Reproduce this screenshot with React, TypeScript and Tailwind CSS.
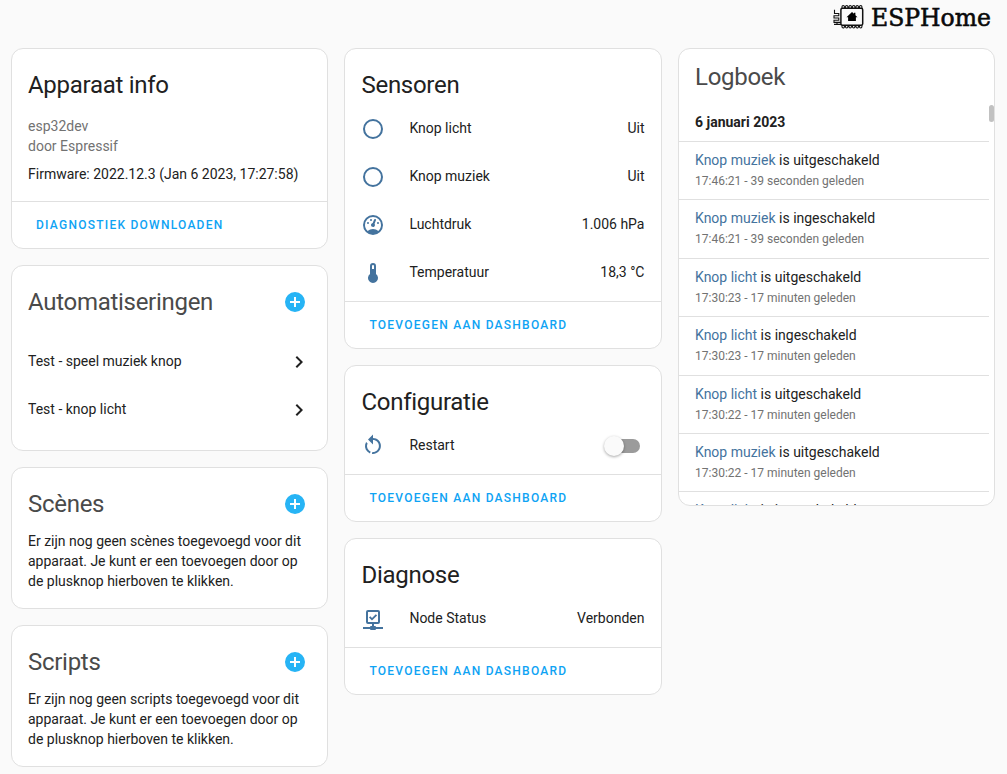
import type { ReactNode } from 'react';

const paths = {
  radio:
    'M12,20A8,8 0 0,1 4,12A8,8 0 0,1 12,4A8,8 0 0,1 20,12A8,8 0 0,1 12,20M12,2A10,10 0 0,0 2,12A10,10 0 0,0 12,22A10,10 0 0,0 22,12A10,10 0 0,0 12,2Z',
  gauge:
    'M12,2A10,10 0 0,0 2,12A10,10 0 0,0 12,22A10,10 0 0,0 22,12A10,10 0 0,0 12,2M12,4A8,8 0 0,1 20,12C20,14.4 19,16.5 17.3,18C15.9,16.7 14,16 12,16C10,16 8.2,16.7 6.7,18C5,16.5 4,14.4 4,12A8,8 0 0,1 12,4M14,5.89C13.62,5.9 13.26,6.15 13.1,6.54L11.81,9.77L11.71,10C11,10.13 10.41,10.6 10.14,11.26C9.73,12.29 10.23,13.45 11.26,13.86C12.29,14.27 13.45,13.77 13.86,12.74C14.12,12.08 14,11.32 13.57,10.76L13.67,10.5L14.96,7.29L14.97,7.26C15.17,6.75 14.92,6.17 14.41,5.96C14.28,5.91 14.15,5.89 14,5.89M10,6A1,1 0 0,0 9,7A1,1 0 0,0 10,8A1,1 0 0,0 11,7A1,1 0 0,0 10,6M7,9A1,1 0 0,0 6,10A1,1 0 0,0 7,11A1,1 0 0,0 8,10A1,1 0 0,0 7,9M17,9A1,1 0 0,0 16,10A1,1 0 0,0 17,11A1,1 0 0,0 18,10A1,1 0 0,0 17,9Z',
  thermometer:
    'M15 13V5A3 3 0 0 0 9 5V13A5 5 0 1 0 15 13M12 4A1 1 0 0 1 13 5V8H11V5A1 1 0 0 1 12 4Z',
  restart:
    'M12,4C14.1,4 16.1,4.8 17.6,6.3C20.7,9.4 20.7,14.5 17.6,17.6C15.8,19.5 13.3,20.2 10.9,19.9L11.4,17.9C13.1,18.1 14.9,17.5 16.2,16.2C18.5,13.9 18.5,10.1 16.2,7.7C15.1,6.6 13.5,6 12,6V10.6L7,5.6L12,0.6V4M6.3,17.6C3.7,15 3.3,11 5.1,7.9L6.6,9.4C5.5,11.6 5.9,14.4 7.8,16.2C8.3,16.7 8.9,17.1 9.6,17.4L9,19.4C8,19 7.1,18.4 6.3,17.6Z',
  network:
    'M15,20A1,1 0 0,0 14,19H13V17H17A2,2 0 0,0 19,15V5A2,2 0 0,0 17,3H7A2,2 0 0,0 5,5V15A2,2 0 0,0 7,17H11V19H10A1,1 0 0,0 9,20H2V22H9A1,1 0 0,0 10,23H14A1,1 0 0,0 15,22H22V20H15M7,15V5H17V15H7M11,13.5L8,10.6L9.3,9.3L11,11L14.8,7.2L16.1,8.5L11,13.5Z',
  plus:
    'M17,13H13V17H11V13H7V11H11V7H13V11H17M12,2A10,10 0 0,0 2,12A10,10 0 0,0 12,22A10,10 0 0,0 22,12A10,10 0 0,0 12,2Z',
  chevron: 'M8.59,16.58L13.17,12L8.59,7.41L10,6L16,12L10,18L8.59,16.58Z',
};

function Icon({ name, className }: { name: keyof typeof paths; className: string }) {
  return (
    <svg viewBox="0 0 24 24" className={`size-6 shrink-0 fill-current ${className}`}>
      <path d={paths[name]} />
    </svg>
  );
}

function Card({ children, className = '' }: { children: ReactNode; className?: string }) {
  return (
    <section className={`flex flex-col overflow-hidden rounded-xl border border-[#e0e0e0] bg-white ${className}`}>
      {children}
    </section>
  );
}

function Title({ children, onAdd = false, className = 'pl-4' }: { children: ReactNode; onAdd?: boolean; className?: string }) {
  return (
    <header
      className={`flex h-[60px] shrink-0 items-center justify-between pt-3 pr-5 ${className} ${onAdd ? 'text-[#4a4a4a]' : ''}`}
    >
      <h1 className="text-2xl leading-[48px] font-normal tracking-[-0.012em]">{children}</h1>
      {onAdd && <Icon name="plus" className="text-[#27b4f5]" />}
    </header>
  );
}

function Action({ children, className = 'px-6' }: { children: ReactNode; className?: string }) {
  return (
    <footer className={`mt-auto flex h-[47px] shrink-0 items-center border-t border-[#e0e0e0] ${className}`}>
      <button className="text-xs font-medium tracking-[1.25px] text-[#0ea3f4] uppercase">{children}</button>
    </footer>
  );
}

function Entity({ icon, name, children }: { icon: keyof typeof paths; name: string; children: ReactNode }) {
  return (
    <div className="flex h-10 items-center">
      <Icon name={icon} className="text-[#44739e]" />
      <span className="-mt-0.5 ml-[24.4px] flex-1">{name}</span>
      <span className="-mt-0.5">{children}</span>
    </div>
  );
}

function EntityCard({ title, children, className }: { title: string; children: ReactNode; className: string }) {
  return (
    <Card className={className}>
      <Title className="pl-[16.5px]">{title}</Title>
      <div className="flex flex-col gap-2 pr-[16.5px] pl-4">{children}</div>
      <Action className="px-[24.4px]">Toevoegen aan dashboard</Action>
    </Card>
  );
}

function Toggle() {
  return (
    <div className="relative mt-0.5 mr-[4.5px] flex h-5 w-9 items-center justify-end">
      <div className="h-3.5 w-8 rounded-full bg-[#9b9b9b]" />
      <div className="absolute top-0 left-0 size-5 rounded-full bg-[#fafafa] shadow-[0_1px_3px_rgba(0,0,0,0.35)]" />
    </div>
  );
}

const log = [
  ['Knop muziek', 'uitgeschakeld', '17:46:21 - 39 seconden geleden'],
  ['Knop muziek', 'ingeschakeld', '17:46:21 - 39 seconden geleden'],
  ['Knop licht', 'uitgeschakeld', '17:30:23 - 17 minuten geleden'],
  ['Knop licht', 'ingeschakeld', '17:30:23 - 17 minuten geleden'],
  ['Knop licht', 'uitgeschakeld', '17:30:22 - 17 minuten geleden'],
  ['Knop muziek', 'uitgeschakeld', '17:30:22 - 17 minuten geleden'],
  ['Knop licht', 'ingeschakeld', '17:30:22 - 17 minuten geleden'],
];

function Logo() {
  return (
    <svg width="160" height="36" viewBox="0 0 160 36" className="block">
      <g fill="none" stroke="#111">
        <rect x="8.9" y="8.2" width="21.8" height="17" rx="1.5" strokeWidth="1.5" />
        <path
          d="M10 8V6.7a1.2 1.2 0 0 1 2.4 0V8m1.1 0V6.7a1.2 1.2 0 0 1 2.4 0V8m1.1 0V6.7a1.2 1.2 0 0 1 2.4 0V8m1.1 0V6.7a1.2 1.2 0 0 1 2.4 0V8m1.1 0V6.7a1.2 1.2 0 0 1 2.4 0V8m1.1 0V6.7a1.2 1.2 0 0 1 2.4 0V8M10 25.5V26.8a1.2 1.2 0 0 0 2.4 0v-1.3m1.1 0V26.8a1.2 1.2 0 0 0 2.4 0v-1.3m1.1 0V26.8a1.2 1.2 0 0 0 2.4 0v-1.3m1.1 0V26.8a1.2 1.2 0 0 0 2.4 0v-1.3m1.1 0V26.8a1.2 1.2 0 0 0 2.4 0v-1.3m1.1 0V26.8a1.2 1.2 0 0 0 2.4 0v-1.3"
          strokeWidth="1.1"
        />
        <path d="M2.5 9.8V13.5H6.8V15.8H2V18H6.8V20.2H2V22.4H9M2 24.4H9M5 22.4V24.4" strokeWidth="1.1" />
      </g>
      <path d="M20 11.9l2 1.9v-1h1.4v2.4l2.1 2h-1.6v3.8h-7.8v-3.8h-1.6z" fill="#000" />
      <text
        x="39"
        y="25.5"
        textLength="120"
        lengthAdjust="spacingAndGlyphs"
        fontSize="24.5"
        fill="#0a0a0a"
        stroke="#0a0a0a"
        strokeWidth="0.6"
        className="font-['DejaVu_Serif',serif]"
      >
        ESPHome
      </text>
    </svg>
  );
}

export default function App() {
  return (
    <main className="flex h-[774px] w-[1007px] flex-col overflow-hidden bg-[#fafafa] font-['Roboto',sans-serif] text-sm leading-5 text-[#212121]">
      <div className="flex h-12 shrink-0 justify-end pr-[15px]">
        <Logo />
      </div>
      <div className="flex items-start gap-4 pl-[11px]">
        <div className="flex w-[317px] flex-col gap-4">
          <Card className="h-[201px]">
            <Title>Apparaat info</Title>
            <div className="px-4 pt-[7px]">
              <p className="text-[#727272]">esp32dev</p>
              <p className="text-[#727272]">door Espressif</p>
              <p className="mt-2">Firmware: 2022.12.3 (Jan 6 2023, 17:27:58)</p>
            </div>
            <Action>Diagnostiek downloaden</Action>
          </Card>
          <Card className="h-[186px]">
            <Title onAdd>Automatiseringen</Title>
            <div className="pt-3 pr-4 pl-4">
              {['Test - speel muziek knop', 'Test - knop licht'].map((name) => (
                <div key={name} className="flex h-12 items-center justify-between">
                  <span className="-mt-0.5">{name}</span>
                  <Icon name="chevron" className="" />
                </div>
              ))}
            </div>
          </Card>
          <Card className="h-[142px]">
            <Title onAdd>Scènes</Title>
            <p className="px-4 pt-[3px]">
              Er zijn nog geen scènes toegevoegd voor dit apparaat. Je kunt er een toevoegen door op de plusknop
              hierboven te klikken.
            </p>
          </Card>
          <Card className="h-[142px]">
            <Title onAdd>Scripts</Title>
            <p className="px-4 pt-[3px]">
              Er zijn nog geen scripts toegevoegd voor dit apparaat. Je kunt er een toevoegen door op de plusknop
              hierboven te klikken.
            </p>
          </Card>
        </div>

        <div className="flex w-[318px] flex-col gap-4">
          <EntityCard title="Sensoren" className="h-[301px]">
            <Entity icon="radio" name="Knop licht">Uit</Entity>
            <Entity icon="radio" name="Knop muziek">Uit</Entity>
            <Entity icon="gauge" name="Luchtdruk">1.006 hPa</Entity>
            <Entity icon="thermometer" name="Temperatuur">18,3 °C</Entity>
          </EntityCard>
          <EntityCard title="Configuratie" className="h-[157px]">
            <Entity icon="restart" name="Restart">
              <Toggle />
            </Entity>
          </EntityCard>
          <EntityCard title="Diagnose" className="h-[157px]">
            <Entity icon="network" name="Node Status">Verbonden</Entity>
          </EntityCard>
        </div>

        <Card className="h-[458px] w-[317px]">
          <h1 className="mt-1 shrink-0 px-4 text-2xl leading-[48px] font-normal tracking-[-0.012em] text-[#4a4a4a]">
            Logboek
          </h1>
          <div className="flex min-h-0 flex-1 overflow-hidden">
            <div className="flex-1">
              <h2 className="h-10 px-4 pt-[11px] font-bold">6 januari 2023</h2>
              {log.map(([name, state, time], i) => (
                <div key={i} className="h-[58.4px] border-t border-[#e0e0e0] px-4 pt-2">
                  <p>
                    <span className="text-[#44739e]">{name}</span> is {state}
                  </p>
                  <p className="text-xs leading-[22px] text-[#727272]">{time}</p>
                </div>
              ))}
            </div>
            <div className="mt-1 h-[17px] w-[5px] rounded-full bg-[#c1c1c1]" />
          </div>
        </Card>
      </div>
    </main>
  );
}
